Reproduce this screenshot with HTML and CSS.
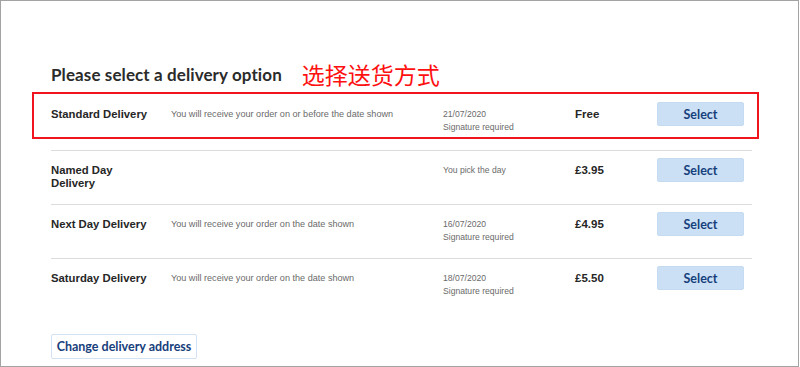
FILE: index.html
```html
<!DOCTYPE html>
<html>
	<head>
		<meta charset="utf-8" />
		<title>Delivery options</title>
		<link rel="stylesheet" href="styles.css">
	</head>
	<body>
		<div class="frame">
			<div class="heading">
				<h2>Please select a delivery option</h2>
				<span class="note">选择送货方式</span>
			</div>

			<div class="options">
				<div class="row marked">
					<div class="name">Standard Delivery</div>
					<div class="desc">You will receive your order on or before the date shown</div>
					<div class="date">21/07/2020<br/>Signature required</div>
					<div class="price">Free</div>
					<button class="select">Select</button>
				</div>
				<div class="row">
					<div class="name">Named Day<br/>Delivery</div>
					<div class="desc"></div>
					<div class="date">You pick the day</div>
					<div class="price">£3.95</div>
					<button class="select">Select</button>
				</div>
				<div class="row">
					<div class="name">Next Day Delivery</div>
					<div class="desc">You will receive your order on the date shown</div>
					<div class="date">16/07/2020<br/>Signature required</div>
					<div class="price">£4.95</div>
					<button class="select">Select</button>
				</div>
				<div class="row">
					<div class="name">Saturday Delivery</div>
					<div class="desc">You will receive your order on the date shown</div>
					<div class="date">18/07/2020<br/>Signature required</div>
					<div class="price">£5.50</div>
					<button class="select">Select</button>
				</div>
			</div>

			<button class="change">Change delivery address</button>
		</div>
	</body>
</html>
```

FILE: styles.css
```css
html, body {
    margin: 0;
    padding: 0;
    background: #fff;
}

.frame {
    box-sizing: border-box;
    width: 799px;
    height: 367px;
    border: 1px solid #a3a3a3;
    padding: 60px 0 0 50px;
    font-family: "Liberation Sans", Arial, sans-serif;
}

.heading {
    display: flex;
    align-items: center;
    height: 27px;
}

    .heading h2 {
        margin: 0;
        font-family: Lato, "Noto Sans", sans-serif;
        font-size: 17px;
        font-weight: 700;
        letter-spacing: 0.1px;
        color: #2b2b2b;
    }

    .heading .note {
        margin-left: 20px;
        font-family: "Noto Sans CJK SC", sans-serif;
        font-size: 23px;
        color: #ff1010;
        line-height: 27px;
    }

.options {
    width: 701px;
    margin-top: 6px;
}

.row {
    position: relative;
    display: grid;
    grid-template-columns: 120px 272px 132px 82px 87px;
    box-sizing: border-box;
    height: 54px;
    padding-top: 7px;
    border-top: 1px solid #dcdcdc;
}

    .row:first-child {
        height: 56px;
        padding-top: 8px;
        border-top: none;
    }

    .row.marked::before {
        content: "";
        position: absolute;
        left: -19px;
        top: -2px;
        width: 723px;
        height: 43px;
        border: 2px solid #f0141e;
    }

.name, .desc, .date, .price {
    padding-top: 6px;
    line-height: 13px;
}

.name {
    font-size: 11.3px;
    font-weight: 700;
    color: #262626;
}

.desc {
    font-size: 9.1px;
    color: #6a6a6a;
}

.date {
    font-size: 8.6px;
    color: #6a6a6a;
}

.price {
    font-size: 11.5px;
    font-weight: 700;
    color: #262626;
}

.select {
    width: 87px;
    height: 24px;
    border: 1px solid #c4dbf1;
    border-radius: 2px;
    background: #cbe0f5;
    font-family: Lato, "Noto Sans", sans-serif;
    font-size: 12.5px;
    font-weight: 700;
    color: #163f7c;
    padding: 0;
}

.change {
    margin-top: 22px;
    height: 25px;
    width: 146px;
    border: 1px solid #d3e3f3;
    border-radius: 2px;
    background: #fff;
    font-family: Lato, "Noto Sans", sans-serif;
    font-size: 12.5px;
    font-weight: 700;
    color: #17407c;
    padding: 0;
}
```
